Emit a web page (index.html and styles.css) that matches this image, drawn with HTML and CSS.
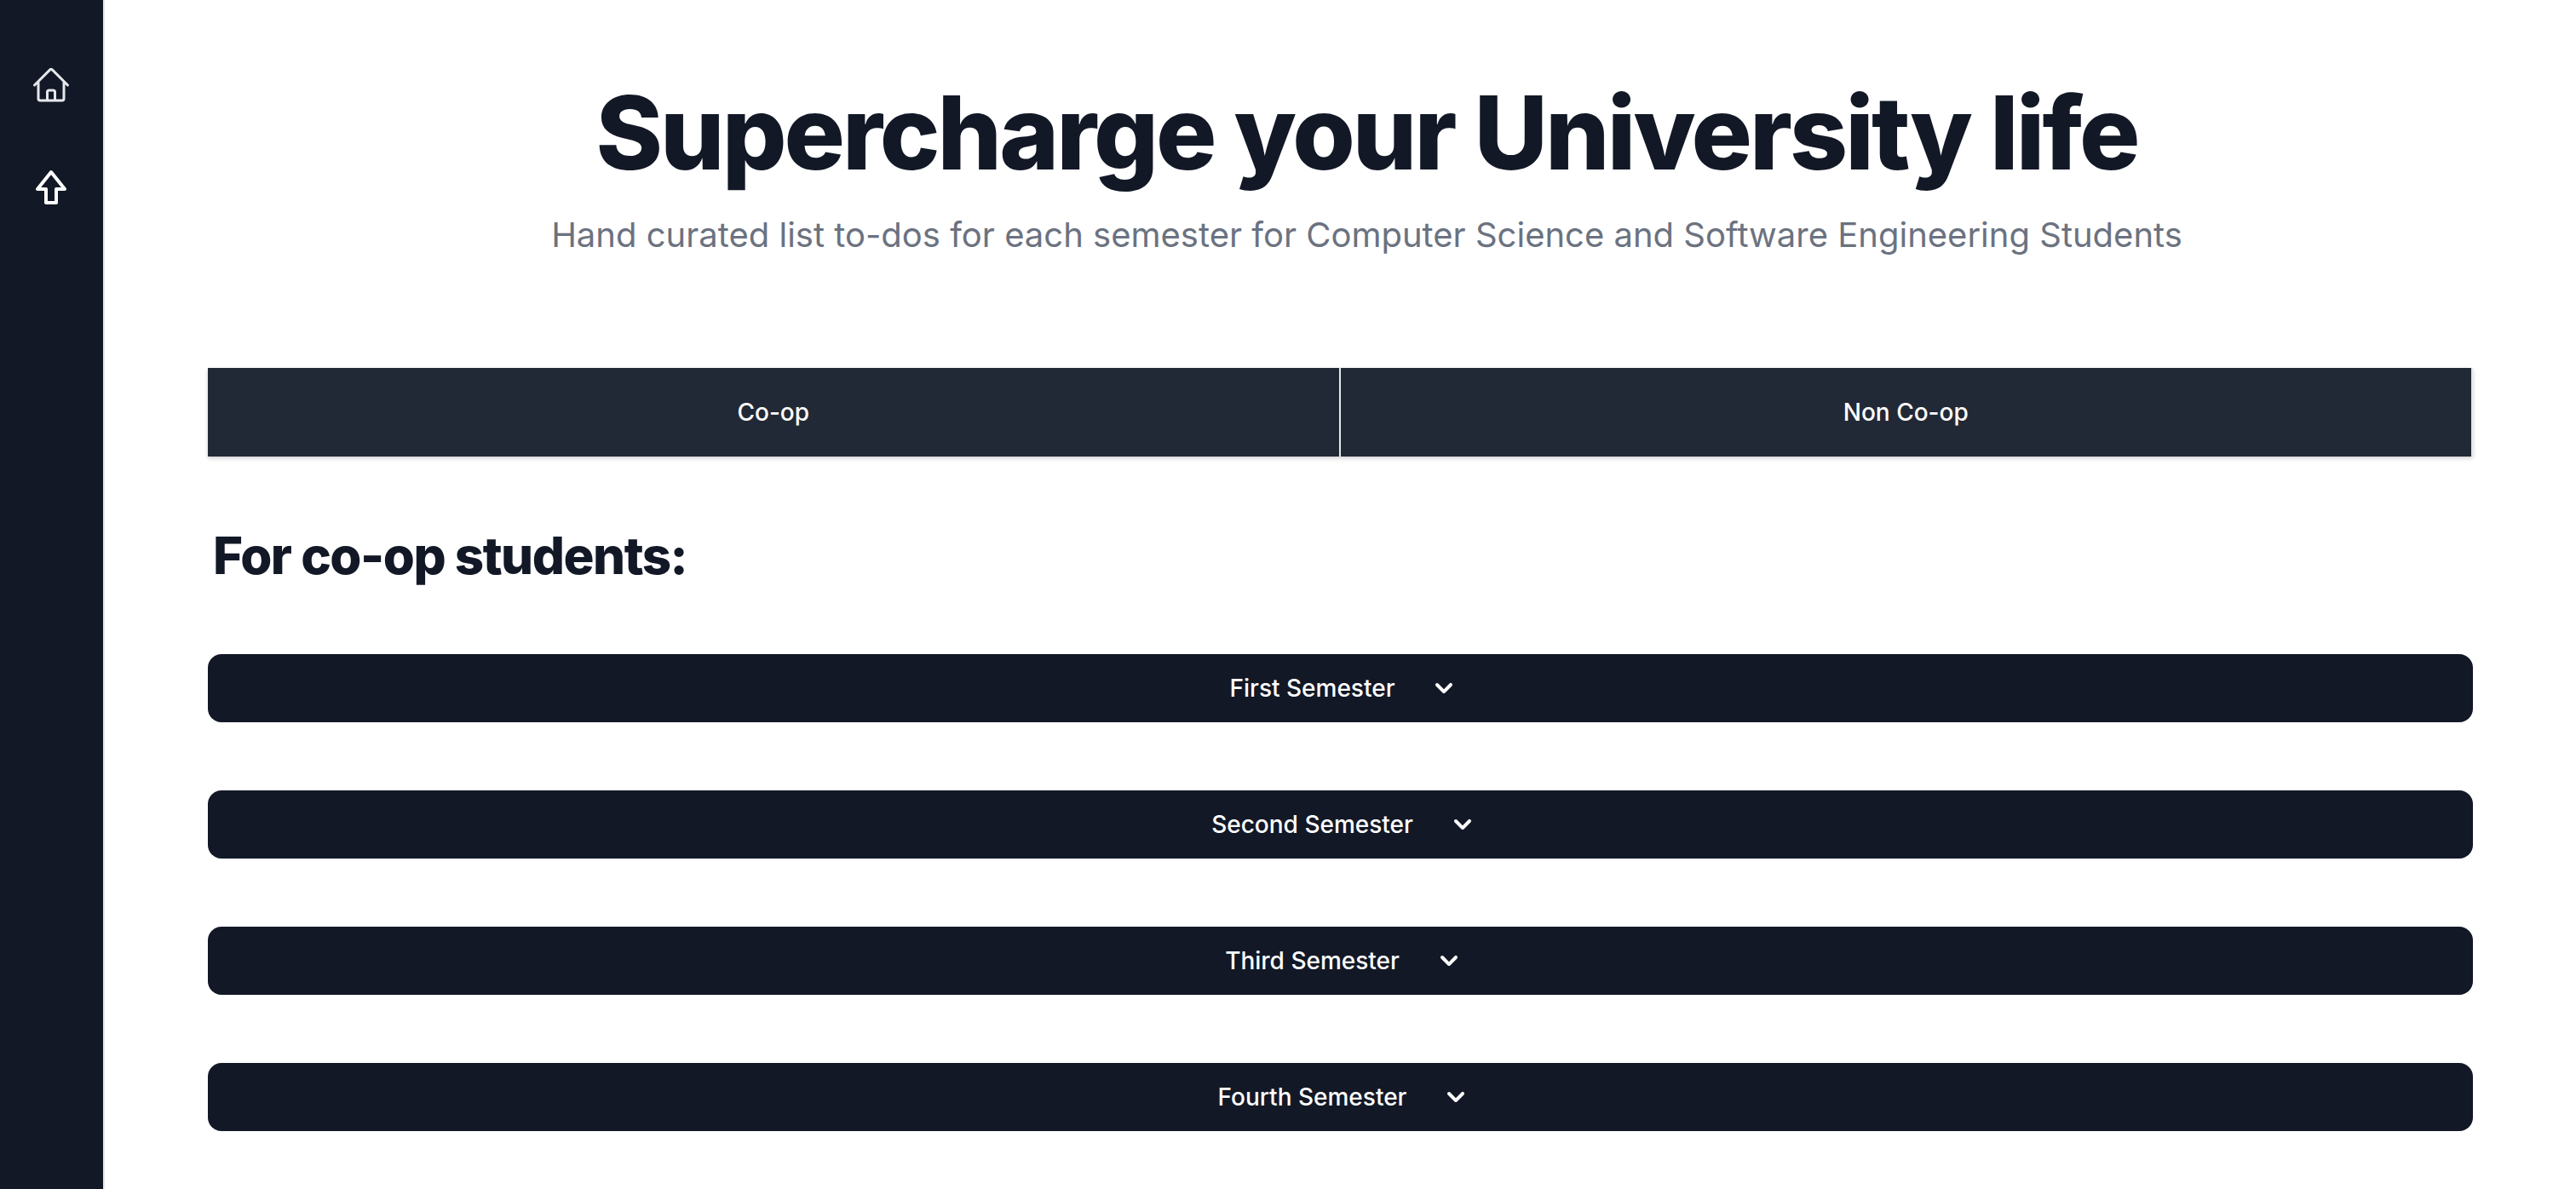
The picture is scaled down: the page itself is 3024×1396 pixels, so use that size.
FILE: index.html
```html
<!DOCTYPE html>
<html lang="en">
<head>
<meta charset="utf-8">
<title>Supercharge your University life</title>
<link rel="stylesheet" href="styles.css">
</head>
<body>
<div class="app">
  <nav class="sidebar" aria-label="Main">
    <a class="nav-link" href="#home" aria-label="Home">
      <svg class="nav-icon nav-icon-muted" viewBox="0 0 24 24" fill="none" stroke="currentColor" stroke-width="1.5" stroke-linecap="round" stroke-linejoin="round"><path d="M2.25 12l8.954-8.955c.44-.439 1.152-.439 1.591 0L21.75 12M4.5 9.75v10.125c0 .621.504 1.125 1.125 1.125H9.75v-4.875c0-.621.504-1.125 1.125-1.125h2.25c.621 0 1.125.504 1.125 1.125V21h4.125c.621 0 1.125-.504 1.125-1.125V9.75M8.25 21h8.25"/></svg>
    </a>
    <a class="nav-link" href="#top" aria-label="Back to top">
      <svg class="nav-icon" viewBox="0 0 24 24" fill="none" stroke="currentColor" stroke-width="2" stroke-linecap="round" stroke-linejoin="round"><path d="M12 3l8 10h-5v8H9v-8H4z"/></svg>
    </a>
  </nav>
  <main class="content" id="top">
    <header class="hero">
      <h1 class="hero-title">Supercharge your University life</h1>
      <p class="hero-text">Hand curated list to-dos for each semester for Computer Science and Software Engineering Students</p>
    </header>
    <div class="tabs">
      <button class="tab" type="button">Co-op</button>
      <button class="tab" type="button">Non Co-op</button>
    </div>
    <h2 class="section-title">For co-op students:</h2>
    <div class="semesters">
      <button class="semester" type="button">First Semester
        <svg class="chevron" viewBox="0 0 20 20" fill="currentColor"><path d="M5.293 7.293a1 1 0 011.414 0L10 10.586l3.293-3.293a1 1 0 111.414 1.414l-4 4a1 1 0 01-1.414 0l-4-4a1 1 0 010-1.414z"/></svg>
      </button>
      <button class="semester" type="button">Second Semester
        <svg class="chevron" viewBox="0 0 20 20" fill="currentColor"><path d="M5.293 7.293a1 1 0 011.414 0L10 10.586l3.293-3.293a1 1 0 111.414 1.414l-4 4a1 1 0 01-1.414 0l-4-4a1 1 0 010-1.414z"/></svg>
      </button>
      <button class="semester" type="button">Third Semester
        <svg class="chevron" viewBox="0 0 20 20" fill="currentColor"><path d="M5.293 7.293a1 1 0 011.414 0L10 10.586l3.293-3.293a1 1 0 111.414 1.414l-4 4a1 1 0 01-1.414 0l-4-4a1 1 0 010-1.414z"/></svg>
      </button>
      <button class="semester" type="button">Fourth Semester
        <svg class="chevron" viewBox="0 0 20 20" fill="currentColor"><path d="M5.293 7.293a1 1 0 011.414 0L10 10.586l3.293-3.293a1 1 0 111.414 1.414l-4 4a1 1 0 01-1.414 0l-4-4a1 1 0 010-1.414z"/></svg>
      </button>
    </div>
  </main>
</div>
</body>
</html>
```
FILE: styles.css
```css
* {
  box-sizing: border-box;
}

body {
  margin: 0;
  background: #fff;
  color: #121826;
  font-family: Inter, "Liberation Sans", sans-serif;
}

h1,
h2,
p {
  margin: 0;
}

button {
  border: 0;
  font: inherit;
  cursor: pointer;
}

.app {
  display: flex;
  min-height: 100vh;
}

.sidebar {
  flex: none;
  display: flex;
  flex-direction: column;
  gap: 72px;
  padding: 76px 37px 0 36px;
  border-right: 2px solid #e5e7eb;
  background: #121826;
}

.nav-link {
  display: block;
  color: #fff;
}

.nav-icon {
  display: block;
  width: 48px;
  height: 48px;
}

.nav-icon-muted {
  color: #e5e7eb;
}

.content {
  flex: 1;
  padding: 96px 121px 64px;
}

.hero {
  padding-left: 62px;
  text-align: center;
}

.hero-title {
  font-size: 119px;
  font-weight: 800;
  line-height: 120px;
  letter-spacing: -0.025em;
}

.hero-text {
  margin-top: 32px;
  color: #6b7280;
  font-size: 40px;
  line-height: 56px;
}

.tabs {
  display: flex;
  margin-top: 128px;
  box-shadow: 0 2px 6px rgba(0, 0, 0, 0.1), 0 2px 4px rgba(0, 0, 0, 0.1);
}

.tab {
  flex: 1;
  padding: 32px;
  border-right: 2px solid #e5e7eb;
  background: #222936;
  color: #fff;
  font-size: 28px;
  font-weight: 500;
  line-height: 40px;
}

.section-title {
  margin: 80px 0;
  padding-left: 6px;
  font-size: 60px;
  font-weight: 800;
  line-height: 72px;
  letter-spacing: -0.025em;
}

.semesters {
  display: flex;
  flex-direction: column;
  gap: 80px;
}

.semester {
  display: flex;
  align-items: center;
  justify-content: center;
  gap: 38px;
  padding: 20px 32px;
  border-radius: 16px;
  background: #121826;
  color: #fff;
  font-size: 28px;
  font-weight: 500;
  line-height: 40px;
}

.chevron {
  width: 40px;
  height: 40px;
  margin-right: -12px;
}
```
